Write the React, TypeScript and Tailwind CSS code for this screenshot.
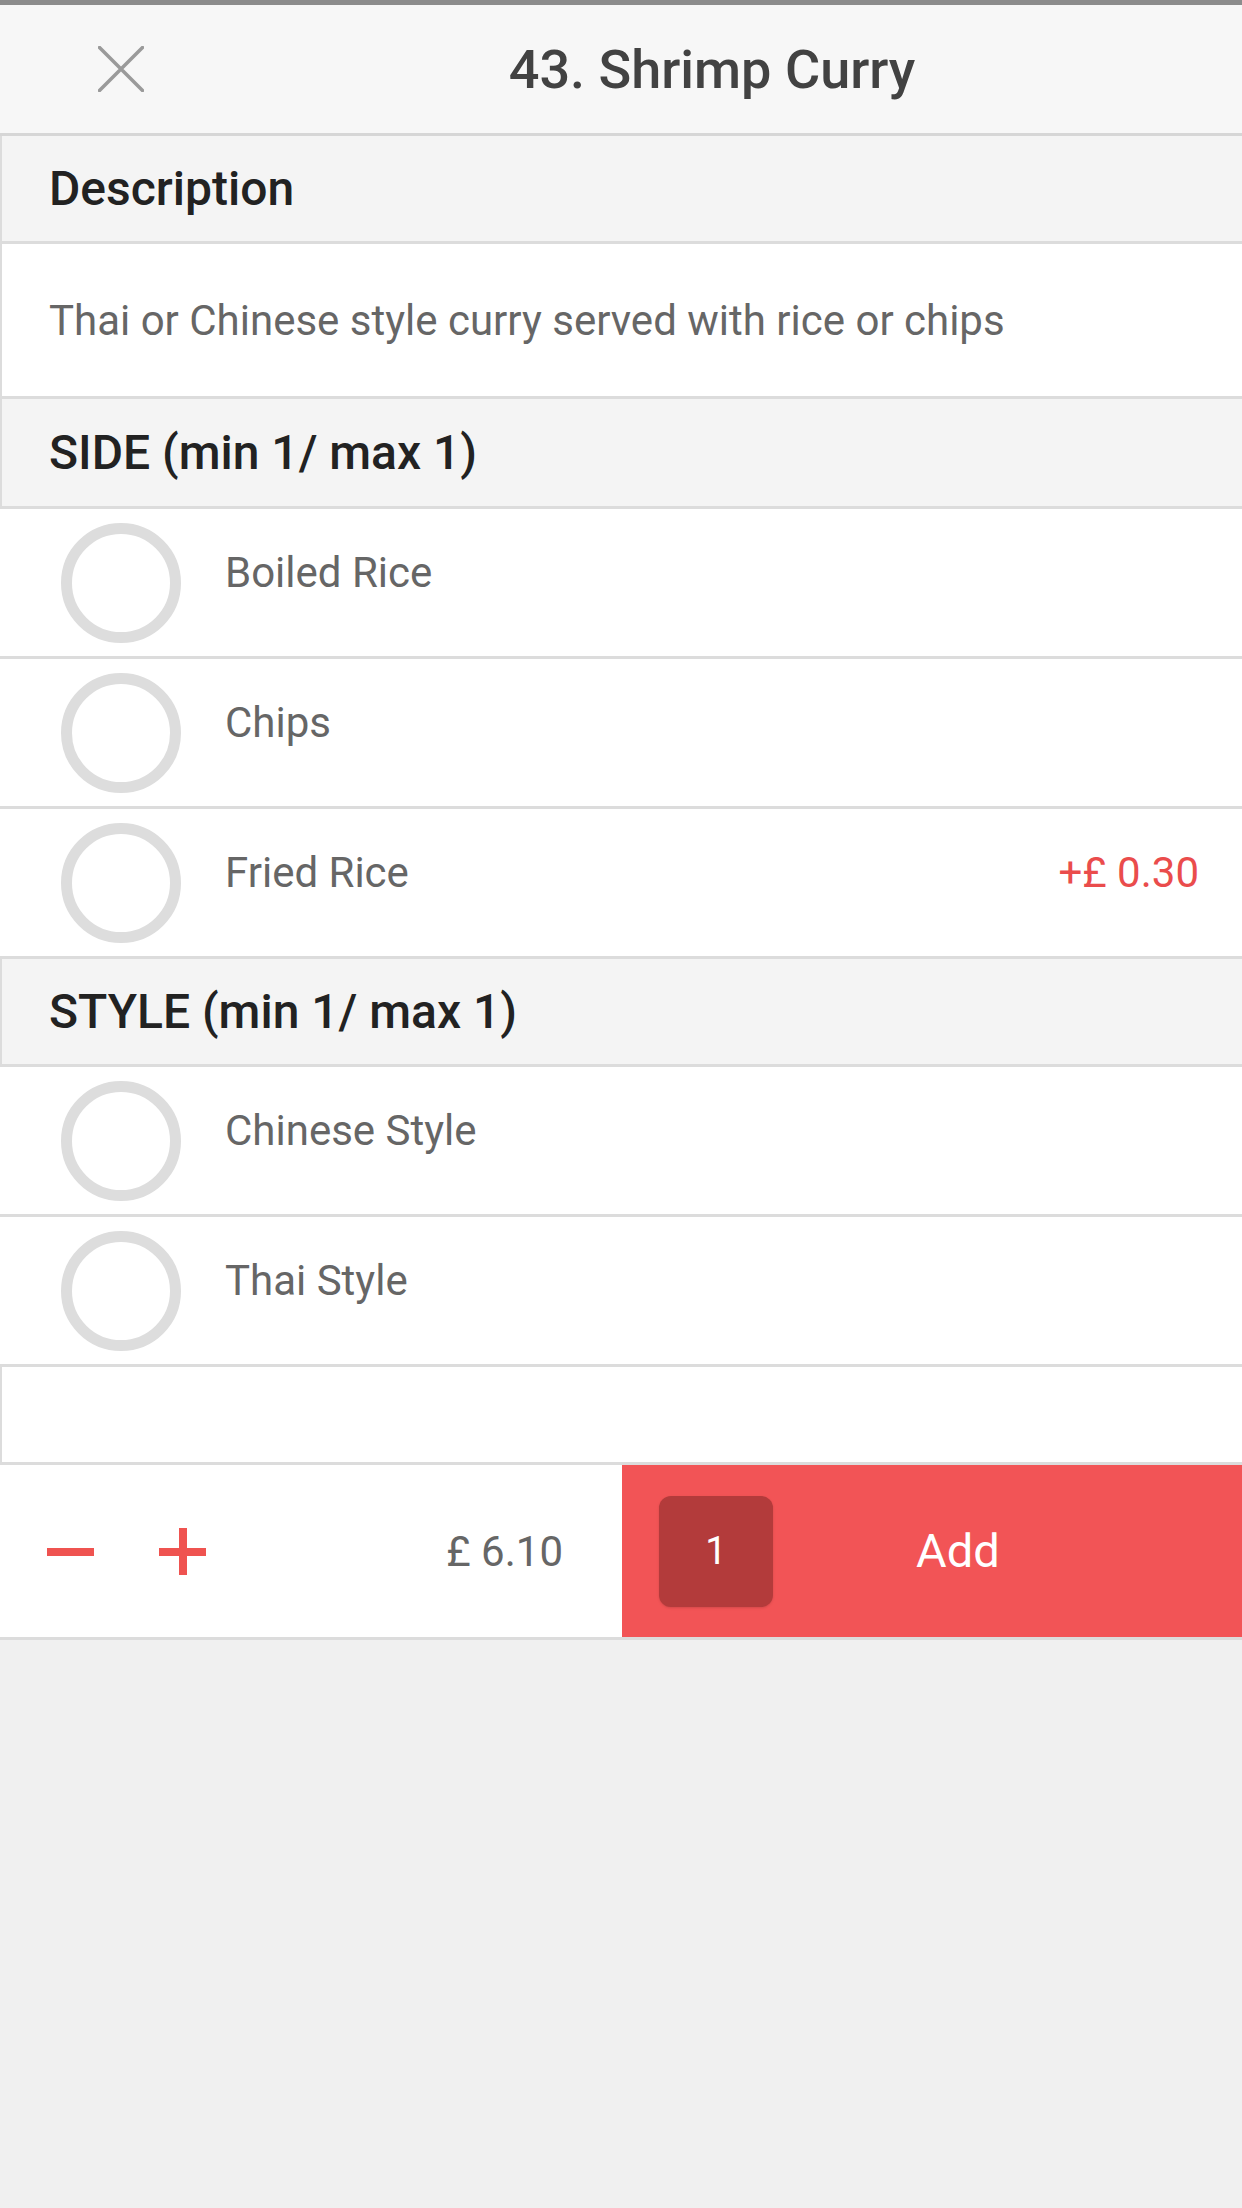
import React from "react";

const font = { fontFamily: "Roboto, 'Noto Sans', sans-serif" };

const SectionHeader = ({ title, tall }: { title: string; tall?: boolean }) => (
    <div className={`${tall ? "h-[110px]" : "h-[108px]"} flex items-center pl-[47px] bg-[#f4f4f4] border-l-2 border-b-[3px] border-[#dcdcdc]`}>
        <span className="text-[48px] font-medium text-[#222222]">{title}</span>
    </div>
);

const Option = ({ label, price }: { label: string; price?: string }) => (
    <div className="h-[150px] flex items-center bg-white border-b-[3px] border-[#dcdcdc]">
        <div className="ml-[61px] w-[120px] h-[120px] rounded-full border-[11px] border-[#dddddd] shrink-0" />
        <span className="ml-[44px] mb-[20px] text-[42px] leading-[48px] text-[#666666] flex-1">{label}</span>
        {price && <span className="mr-[43px] mb-[20px] text-[42px] leading-[48px] text-[#ea4c4c]">{price}</span>}
    </div>
);

export default function App() {
    return (
        <div className="min-h-[2208px] w-[1242px] bg-[#f0f0f0]" style={font}>
            <div className="h-[5px] bg-[#8c8c8c]" />
            {/* header */}
            <div className="h-[131px] flex items-center bg-[#f7f7f7] border-b-[3px] border-[#d6d6d6]">
                <div className="w-[182px] shrink-0 pl-[98px]">
                    <svg width="46" height="46" viewBox="0 0 46 46">
                        <path d="M1.5 1.5 L44.5 44.5 M44.5 1.5 L1.5 44.5" stroke="#9a9a9a" strokeWidth="3.5" strokeLinecap="round" />
                    </svg>
                </div>
                <h1 className="flex-1 text-center text-[54px] font-medium text-[#424242]">43. Shrimp Curry</h1>
            </div>

            <SectionHeader title="Description" />
            <div className="h-[155px] flex items-center pl-[47px] bg-white border-l-2 border-b-[3px] border-[#dcdcdc]">
                <span className="text-[42px] text-[#666666]">Thai or Chinese style curry served with rice or chips</span>
            </div>

            <SectionHeader title="SIDE (min 1/ max 1)" tall />
            <Option label="Boiled Rice" />
            <Option label="Chips" />
            <Option label="Fried Rice" price="+£ 0.30" />

            <SectionHeader title="STYLE (min 1/ max 1)" />
            <Option label="Chinese Style" />
            <Option label="Thai Style" />

            <div className="h-[98px] bg-white border-l-2 border-b-[3px] border-[#dcdcdc]" />

            {/* footer */}
            <div className="h-[175px] flex bg-white border-b-[3px] border-[#dcdcdc]">
                <div className="w-[622px] flex items-center">
                    <button type="button" className="ml-[47px]">
                        <svg width="47" height="47" viewBox="0 0 47 47">
                            <rect x="0" y="20" width="47" height="8" fill="#ef5350" />
                        </svg>
                    </button>
                    <button type="button" className="ml-[65px]">
                        <svg width="47" height="47" viewBox="0 0 47 47">
                            <rect x="0" y="20" width="47" height="8" fill="#ef5350" />
                            <rect x="20" y="0" width="8" height="47" fill="#ef5350" />
                        </svg>
                    </button>
                    <span className="ml-auto mr-[59px] text-[42px] text-[#666666]">£ 6.10</span>
                </div>
                <button type="button" className="flex-1 flex items-center bg-[#f25456]">
                    <span className="ml-[37px] w-[114px] h-[111px] rounded-[12px] bg-[#b33b3b] flex items-center justify-center text-[38px] text-white shadow-sm">1</span>
                    <span className="ml-[143px] text-[47px] text-white">Add</span>
                </button>
            </div>
        </div>
    );
}
